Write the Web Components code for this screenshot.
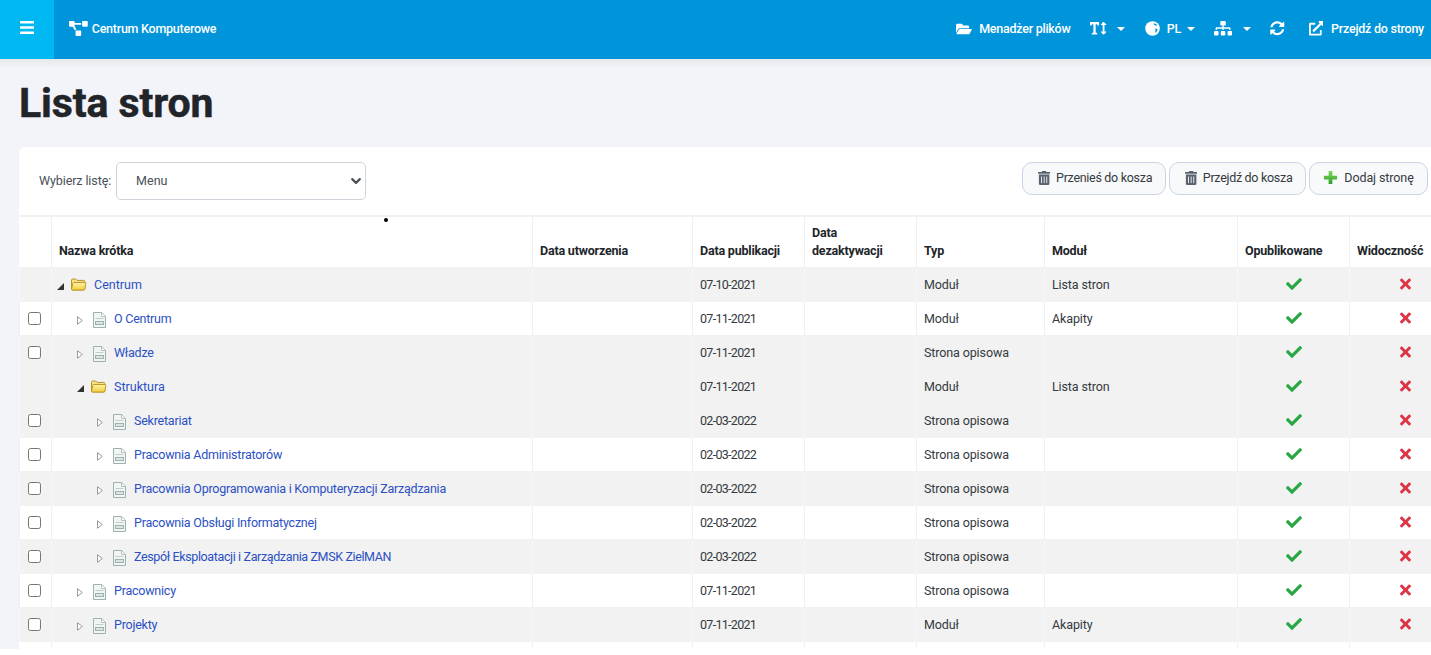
<!DOCTYPE html>
<html lang="pl">
<head>
<meta charset="utf-8">
<title>Lista stron</title>
<style>
  html, body { margin: 0; height: 100%; overflow: hidden; background: #fff; }
  body { font-family: Roboto, "Liberation Sans", sans-serif; font-size: 12.5px; color: #212529; }
</style>
</head>
<body>
<app-shell>
  <top-bar slot="top"></top-bar>
  <page-title>Lista stron</page-title>
  <list-card>
    <list-toolbar></list-toolbar>
    <page-table></page-table>
  </list-card>
</app-shell>

<script>
// Font Awesome style glyphs, drawn inline
const ICONS = {
  bars: ['0 0 448 512', 'M16 132h416c8.837 0 16-7.163 16-16V76c0-8.837-7.163-16-16-16H16C7.163 60 0 67.163 0 76v40c0 8.837 7.163 16 16 16zm0 160h416c8.837 0 16-7.163 16-16v-40c0-8.837-7.163-16-16-16H16c-8.837 0-16 7.163-16 16v40c0 8.837 7.163 16 16 16zm0 160h416c8.837 0 16-7.163 16-16v-40c0-8.837-7.163-16-16-16H16c-8.837 0-16 7.163-16 16v40c0 8.837 7.163 16 16 16z'],
  diagram: ['0 0 640 512', 'M384 320H256c-17.67 0-32 14.33-32 32v128c0 17.67 14.33 32 32 32h128c17.67 0 32-14.33 32-32V352c0-17.67-14.33-32-32-32zM192 32c0-17.67-14.33-32-32-32H32C14.33 0 0 14.33 0 32v128c0 17.67 14.33 32 32 32h95.72l73.16 128.04C211.98 300.98 232.4 288 256 288h.28L192 175.51V128h224V64H192V32zM608 0H480c-17.67 0-32 14.33-32 32v128c0 17.67 14.33 32 32 32h128c17.67 0 32-14.33 32-32V32c0-17.67-14.33-32-32-32z'],
  folder: ['0 0 576 512', 'M572.694 292.093L500.27 416.248A63.997 63.997 0 0 1 444.989 448H45.025c-18.523 0-30.064-20.093-20.731-36.093l72.424-124.155A64 64 0 0 1 152 256h399.964c18.523 0 30.064 20.093 20.73 36.093zM152 224h328v-48c0-26.51-21.49-48-48-48H272l-64-64H48C21.49 64 0 85.49 0 112v278.046l69.077-118.418C86.214 242.25 117.989 224 152 224z'],
  textHeight: ['0 0 576 512', 'M304 32H16A16 16 0 0 0 0 48v96a16 16 0 0 0 16 16h32a16 16 0 0 0 16-16v-32h56v304H80a16 16 0 0 0-16 16v32a16 16 0 0 0 16 16h160a16 16 0 0 0 16-16v-32a16 16 0 0 0-16-16h-40V112h56v32a16 16 0 0 0 16 16h32a16 16 0 0 0 16-16V48a16 16 0 0 0-16-16zm256 336h-48V144h48c14.31 0 21.33-17.31 11.31-27.31l-80-80a16 16 0 0 0-22.62 0l-80 80C379.36 126 384.36 144 400 144h48v224h-48c-14.31 0-21.32 17.31-11.31 27.31l80 80a16 16 0 0 0 22.62 0l80-80C580.64 386 575.64 368 560 368z'],
  sitemap: ['0 0 640 512', 'M128 352H32c-17.67 0-32 14.33-32 32v96c0 17.67 14.33 32 32 32h96c17.67 0 32-14.33 32-32v-96c0-17.67-14.33-32-32-32zm-24-80h192v48h48v-48h192v48h48v-57.59c0-21.17-17.23-38.41-38.41-38.41H344v-64h40c17.67 0 32-14.33 32-32V32c0-17.67-14.33-32-32-32H256c-17.67 0-32 14.33-32 32v96c0 17.67 14.33 32 32 32h40v64H94.41C73.23 224 56 241.23 56 262.41V320h48v-48zm264 80h-96c-17.67 0-32 14.33-32 32v96c0 17.67 14.33 32 32 32h96c17.67 0 32-14.33 32-32v-96c0-17.67-14.33-32-32-32zm240 0h-96c-17.67 0-32 14.33-32 32v96c0 17.67 14.33 32 32 32h96c17.67 0 32-14.33 32-32v-96c0-17.67-14.33-32-32-32z'],
  sync: ['0 0 512 512', 'M370.72 133.28C339.458 104.008 298.888 87.962 255.848 88c-77.458.068-144.328 53.178-162.791 126.85-1.344 5.363-6.122 9.15-11.651 9.15H24.103c-7.498 0-13.194-6.807-11.807-14.176C33.933 94.924 134.813 8 256 8c66.448 0 126.791 26.136 171.315 68.685L463.03 40.97C478.149 25.851 504 36.559 504 57.941V192c0 13.255-10.745 24-24 24H345.941c-21.382 0-32.09-25.851-16.971-40.971l41.75-41.749zM32 296h134.059c21.382 0 32.09 25.851 16.971 40.971l-41.75 41.75c31.262 29.273 71.835 45.319 114.876 45.28 77.418-.07 144.315-53.144 162.787-126.849 1.344-5.363 6.122-9.15 11.651-9.15h57.304c7.498 0 13.194 6.807 11.807 14.176C478.067 417.076 377.187 504 256 504c-66.448 0-126.791-26.136-171.315-68.685L48.97 471.03C33.851 486.149 8 475.441 8 454.059V320c0-13.255 10.745-24 24-24z'],
  external: ['0 0 512 512', 'M432,320H400a16,16,0,0,0-16,16V448H64V128H208a16,16,0,0,0,16-16V80a16,16,0,0,0-16-16H48A48,48,0,0,0,0,112V464a48,48,0,0,0,48,48H400a48,48,0,0,0,48-48V336A16,16,0,0,0,432,320ZM488,0h-128c-21.37,0-32.05,25.91-17,41l35.73,35.73L135,320.37a24,24,0,0,0,0,34L157.67,377a24,24,0,0,0,34,0L435.28,133.32,471,169c15,15,41,4.5,41-17V24A24,24,0,0,0,488,0Z'],
  trash: ['0 0 448 512', 'M32 464a48 48 0 0 0 48 48h288a48 48 0 0 0 48-48V128H32zm272-256a16 16 0 0 1 32 0v224a16 16 0 0 1-32 0zm-96 0a16 16 0 0 1 32 0v224a16 16 0 0 1-32 0zm-96 0a16 16 0 0 1 32 0v224a16 16 0 0 1-32 0zM432 32H312l-9.4-18.7A24 24 0 0 0 281.1 0H166.8a23.72 23.72 0 0 0-21.4 13.3L136 32H16A16 16 0 0 0 0 48v32a16 16 0 0 0 16 16h416a16 16 0 0 0 16-16V48a16 16 0 0 0-16-16z'],
  check: ['0 0 512 512', 'M173.898 439.404l-166.4-166.4c-9.997-9.997-9.997-26.206 0-36.204l36.203-36.204c9.997-9.998 26.207-9.998 36.204 0L192 312.69 432.095 72.596c9.997-9.997 26.207-9.997 36.204 0l36.203 36.204c9.997 9.997 9.997 26.206 0 36.204l-294.4 294.401c-9.998 9.997-26.207 9.997-36.204-.001z'],
  times: ['0 0 352 512', 'M242.72 256l100.07-100.07c12.28-12.28 12.28-32.19 0-44.48l-22.24-22.24c-12.28-12.28-32.19-12.28-44.48 0L176 189.28 75.93 89.21c-12.28-12.28-32.19-12.28-44.48 0L9.21 111.45c-12.28 12.28-12.28 32.19 0 44.48L109.28 256 9.21 356.07c-12.28 12.28-12.28 32.19 0 44.48l22.24 22.24c12.28 12.28 32.2 12.28 44.48 0L176 322.72l100.07 100.07c12.28 12.28 32.2 12.28 44.48 0l22.24-22.24c12.28-12.28 12.28-32.19 0-44.48L242.72 256z']
};

function icon(name, height, color) {
  const [box, d] = ICONS[name];
  const [, , w, h] = box.split(' ').map(Number);
  return `<svg width="${(height * w / h).toFixed(2)}" height="${height}" viewBox="${box}" fill="${color || 'currentColor'}" aria-hidden="true"><path d="${d}"/></svg>`;
}

// small globe, the land is cut out with the bar colour
const GLOBE = `<svg width="15" height="15" viewBox="0 0 16 16" aria-hidden="true"><circle cx="8" cy="8" r="7.8" fill="#fff"/><path d="M9.2 2.4 12 3.2 12.8 4.8 11.6 5.2 10.8 4.2 9.6 4ZM10.8 8 13.4 8.4 13 10.4 11.6 12.4 10.8 12 11.2 10.2Z" fill="#0095da"/></svg>`;

const CARET = `<i style="display:inline-block;border-top:4px solid currentColor;border-left:4px solid transparent;border-right:4px solid transparent"></i>`;

class AppShell extends HTMLElement {
  constructor() {
    super();
    this.attachShadow({ mode: 'open' });
    this.shadowRoot.innerHTML = `
      <style>
        :host { display: flex; flex-direction: column; height: 649px; background: #f3f4f9; overflow: hidden; }
        main { flex: 1; min-height: 0; display: flex; flex-direction: column; padding-left: 19px; background: linear-gradient(#e6e7eb, #f3f4f9 9px); }
      </style>
      <slot name="top"></slot>
      <main><slot></slot></main>`;
  }
}

class TopBar extends HTMLElement {
  constructor() {
    super();
    this.attachShadow({ mode: 'open' });
    this.shadowRoot.innerHTML = `
      <style>
        :host { display: flex; align-items: center; height: 59px; background: #0095da; color: #fff; font-weight: 500; font-size: 12.5px; letter-spacing: -.25px; white-space: nowrap; }
        .toggle { width: 54px; height: 100%; background: #00b8f1; display: flex; align-items: center; justify-content: center; padding-bottom: 4px; box-sizing: border-box; }
        .brand { display: flex; align-items: center; gap: 4px; margin-left: 15px; padding-bottom: 2px; }
        .right { margin-left: auto; display: flex; align-items: center; padding: 0 7px 2px 0; }
        .item { display: flex; align-items: center; }
        .item svg { display: block; }
      </style>
      <div class="toggle">${icon('bars', 17)}</div>
      <div class="brand">${icon('diagram', 15)}<span>Centrum Komputerowe</span></div>
      <div class="right">
        <div class="item" style="gap:7px">${icon('folder', 14)}<span>Menadżer plików</span></div>
        <div class="item" style="gap:10px;margin-left:20px">${icon('textHeight', 14.5)}${CARET}</div>
        <div class="item" style="margin-left:20px">${GLOBE}<span style="margin:0 6px 0 7px">PL</span>${CARET}</div>
        <div class="item" style="margin-left:19px;gap:11px">${icon('sitemap', 14.5)}${CARET}</div>
        <div class="item" style="margin-left:19px">${icon('sync', 14.5)}</div>
        <div class="item" style="margin-left:24px;gap:8px">${icon('external', 14.5)}<span>Przejdź do strony</span></div>
      </div>`;
  }
}

class PageTitle extends HTMLElement {
  constructor() {
    super();
    this.attachShadow({ mode: 'open' });
    this.shadowRoot.innerHTML = `
      <style>
        :host { display: block; flex: none; height: 88px; }
        h1 { margin: 0; padding-top: 20px; font: 700 41px/48px Roboto, sans-serif; letter-spacing: -.1px; color: #212529; -webkit-text-stroke: .5px #212529; }
      </style>
      <h1><slot></slot></h1>`;
  }
}

class ListCard extends HTMLElement {
  constructor() {
    super();
    this.attachShadow({ mode: 'open' });
    this.shadowRoot.innerHTML = `
      <style>
        :host { display: block; flex: 1; min-height: 0; position: relative; background: #fff; border-radius: 6px 0 0 0; overflow: hidden; }
        /* stray dot that sits over the table */
        .dot { position: absolute; left: 365px; top: 71px; width: 4px; height: 4px; border-radius: 50%; background: #000; }
      </style>
      <slot></slot>
      <div class="dot"></div>`;
  }
}

class ListToolbar extends HTMLElement {
  constructor() {
    super();
    this.attachShadow({ mode: 'open' });
    const chevron = "data:image/svg+xml,%3Csvg xmlns='http://www.w3.org/2000/svg' viewBox='0 0 16 16'%3E%3Cpath fill='none' stroke='%23495057' stroke-linecap='round' stroke-linejoin='round' stroke-width='3.4' d='M2 5l6 6 6-6'/%3E%3C/svg%3E";
    this.shadowRoot.innerHTML = `
      <style>
        :host { display: flex; justify-content: space-between; align-items: flex-start; height: 53px; padding: 15px 3px 0 20px; border-bottom: 2px solid #f2f2f2; font-size: 12.5px; color: #495057; }
        .pick { display: flex; align-items: center; gap: 5px; height: 38px; }
        label { margin-bottom: 2px; letter-spacing: -.1px; }
        select { appearance: none; width: 250px; height: 38px; padding: 0 19px 2px; border: 1px solid #ced4da; border-radius: 5px; color: #495057; font: inherit; background: #fff url("${chevron}") no-repeat right 4px center / 10px 10px; }
        .actions { display: flex; gap: 3px; }
      </style>
      <div class="pick"><label for="list">Wybierz listę:</label>
        <select id="list"><option>Menu</option></select></div>
      <div class="actions">
        <tool-button icon="trash" style="--w:144px;--ls:-.3px;--pl:2px">Przenieś do kosza</tool-button>
        <tool-button icon="trash" style="--w:137px;--ls:-.3px;--pl:2px">Przejdź do kosza</tool-button>
        <tool-button icon="plus" style="--w:119px;--ls:-.1px;--pl:0px">Dodaj stronę</tool-button>
      </div>`;
  }
}

class ToolButton extends HTMLElement {
  constructor() {
    super();
    this.attachShadow({ mode: 'open' });
    const name = this.getAttribute('icon');
    const glyph = name === 'plus'
      ? `<svg width="15" height="15" viewBox="0 0 16 16" aria-hidden="true"><defs><linearGradient id="g" x1="0" y1="0" x2="0" y2="1"><stop offset="0" stop-color="#7ed957"/><stop offset="1" stop-color="#2f9e2c"/></linearGradient></defs><path d="M6 1h4v5h5v4h-5v5H6v-5H1V6h5z" fill="url(#g)"/></svg>`
      : icon('trash', 14, '#5a6270');
    this.shadowRoot.innerHTML = `
      <style>
        :host { display: block; }
        button { display: flex; align-items: center; justify-content: center; gap: 6px; width: var(--w); height: 33px; padding: 0 0 2px var(--pl); border: 1px solid #c9d4e6; border-radius: 10px; background: #f8f9fa; color: #343a40; font: inherit; font-size: 12.5px; letter-spacing: var(--ls); }
      </style>
      <button type="button">${glyph}<span><slot></slot></span></button>`;
  }
}

const COLS = '32px 481px 160px 112px 112px 128px 193px 112px 112px';

class PageTable extends HTMLElement {
  constructor() {
    super();
    this.attachShadow({ mode: 'open' });
    const rows = [
      ['Centrum', 0, 'folder', '07-10-2021', 'Moduł', 'Lista stron', 'g'],
      ['O Centrum', 1, 'doc', '07-11-2021', 'Moduł', 'Akapity', ''],
      ['Władze', 1, 'doc', '07-11-2021', 'Strona opisowa', '', 'g'],
      ['Struktura', 1, 'folder', '07-11-2021', 'Moduł', 'Lista stron', 'g'],
      ['Sekretariat', 2, 'doc', '02-03-2022', 'Strona opisowa', '', 'g'],
      ['Pracownia Administratorów', 2, 'doc', '02-03-2022', 'Strona opisowa', '', ''],
      ['Pracownia Oprogramowania i Komputeryzacji Zarządzania', 2, 'doc', '02-03-2022', 'Strona opisowa', '', 'g'],
      ['Pracownia Obsługi Informatycznej', 2, 'doc', '02-03-2022', 'Strona opisowa', '', ''],
      ['Zespół Eksploatacji i Zarządzania ZMSK ZielMAN', 2, 'doc', '02-03-2022', 'Strona opisowa', '', 'g', -.37],
      ['Pracownicy', 1, 'doc', '07-11-2021', 'Strona opisowa', '', ''],
      ['Projekty', 1, 'doc', '07-11-2021', 'Moduł', 'Akapity', 'g']
    ];
    const heads = ['', 'Nazwa krótka', 'Data utworzenia', 'Data publikacji', 'Data dezaktywacji', 'Typ', 'Moduł', 'Opublikowane', 'Widoczność'];
    this.shadowRoot.innerHTML = `
      <style>
        :host { display: block; --cols: ${COLS}; }
        .head { display: grid; grid-template-columns: var(--cols); height: 51px; font-weight: 700; font-size: 12.5px; letter-spacing: -.2px; color: #212529; }
        .head div { display: flex; align-items: flex-end; padding: 0 7px 8px; border-left: 1px solid #f0f0f0; line-height: 18px; }
        .head div:first-child { border-left: 0; }
        .tail { display: grid; grid-template-columns: var(--cols); height: 7px; }
        .tail div { border-left: 1px solid #f0f0f0; }
        .tail div:first-child { border-left: 0; }
      </style>
      <div class="head">${heads.map(h => `<div><span>${h}</span></div>`).join('')}</div>
      ${rows.map(r => `<page-row name="${r[0]}" level="${r[1]}" kind="${r[2]}" pub="${r[3]}" type="${r[4]}" module="${r[5]}" ${r[6] ? 'shaded' : ''} ${r[7] ? `spacing="${r[7]}"` : ''}></page-row>`).join('')}
      <div class="tail">${heads.map(() => '<div></div>').join('')}</div>`;
  }
}

const FOLDER_ICON = `<svg width="17" height="14" viewBox="0 0 17 14" aria-hidden="true"><defs><linearGradient id="f" x1="0" y1="0" x2="0" y2="1"><stop offset="0" stop-color="#fff3a8"/><stop offset="1" stop-color="#f4cf3c"/></linearGradient></defs><path d="M1.5 12V3.2c0-.7.5-1.2 1.2-1.2h3l1.3 1.4h6.6c.7 0 1.2.5 1.2 1.2V12c0 .6-.5 1-1 1H2.5c-.5 0-1-.4-1-1z" fill="#f7e08a" stroke="#b8922a"/><path d="M1.6 12.2 2.8 6.3c.1-.5.4-.8.9-.8H15c.6 0 .9.4.8.9l-1 5.8c-.1.5-.4.8-.9.8H2.5c-.6 0-1-.4-.9-.8z" fill="url(#f)" stroke="#c09a26"/></svg>`;
const DOC_ICON = `<svg style="margin-top:4px" width="13" height="16" viewBox="0 0 13 16" aria-hidden="true"><path d="M.5.5h8.2l3.8 3.8v11.2H.5z" fill="#f1f5f4" stroke="#9fb0b0"/><path d="M8.5.8v3.7h3.7" fill="#fff" stroke="#b5c2bf"/><path d="M2.5 6.5h8" stroke="#c2cecc"/><rect x="2.5" y="9.5" width="8" height="3" fill="#dbe5e2" stroke="#9fb0b0"/></svg>`;
const OPEN_TRI = `<svg width="7" height="7" viewBox="0 0 7 7" aria-hidden="true"><path d="M0 7 7 0v7z" fill="#333"/></svg>`;
const CLOSED_TRI = `<svg width="6" height="9" viewBox="0 0 6 9" aria-hidden="true"><path d="M.5.7 5.3 4.5.5 8.3z" fill="#fff" stroke="#9a9a9a"/></svg>`;

class PageRow extends HTMLElement {
  constructor() {
    super();
    this.attachShadow({ mode: 'open' });
  }

  connectedCallback() {
    const get = n => this.getAttribute(n) || '';
    const folder = get('kind') === 'folder';
    const indent = 5 + Number(get('level')) * 20;
    const spacing = folder ? 0 : (get('spacing') || -.23);
    this.shadowRoot.innerHTML = `
      <style>
        :host { display: grid; grid-template-columns: var(--cols); height: 34px; font-size: 12.5px; color: #343a40; }
        :host([shaded]) { background: #f2f2f2; box-shadow: 0 -1px 0 #f2f2f2; }
        .c { display: flex; align-items: center; padding: 0 7px 2px; border-left: 1px solid #f0f0f0; white-space: nowrap; min-width: 0; }
        .c:first-child { border-left: 0; padding: 0 0 2px; justify-content: center; }
        :host([shaded]) .c { border-left-color: #f7f7f7; }
        input { margin: 0 0 0 1px; width: 13px; height: 13px; }
        .tree { padding-left: ${indent}px; }
        .tree svg { flex: none; display: block; }
        .tri { width: ${folder ? 13 : 16}px; display: flex; align-items: center; margin-top: 4px; flex: none; }
        .name { color: #2b50c4; letter-spacing: ${spacing}px; }
        .date { letter-spacing: -.7px; }
        .txt { letter-spacing: -.12px; }
        .mid { justify-content: center; }
      </style>
      <div class="c">${folder ? '' : '<input type="checkbox">'}</div>
      <div class="c tree"><span class="tri">${folder ? OPEN_TRI : CLOSED_TRI}</span>${folder ? FOLDER_ICON : DOC_ICON}<span class="name" style="margin-left:${folder ? 7 : 8}px">${get('name')}</span></div>
      <div class="c"></div>
      <div class="c date">${get('pub')}</div>
      <div class="c"></div>
      <div class="c txt">${get('type')}</div>
      <div class="c txt">${get('module')}</div>
      <div class="c mid">${icon('check', 16, '#28a745')}</div>
      <div class="c mid">${icon('times', 16, '#dc3545')}</div>`;
  }
}

customElements.define('app-shell', AppShell);
customElements.define('top-bar', TopBar);
customElements.define('page-title', PageTitle);
customElements.define('list-card', ListCard);
customElements.define('list-toolbar', ListToolbar);
customElements.define('tool-button', ToolButton);
customElements.define('page-table', PageTable);
customElements.define('page-row', PageRow);
</script>
</body>
</html>
